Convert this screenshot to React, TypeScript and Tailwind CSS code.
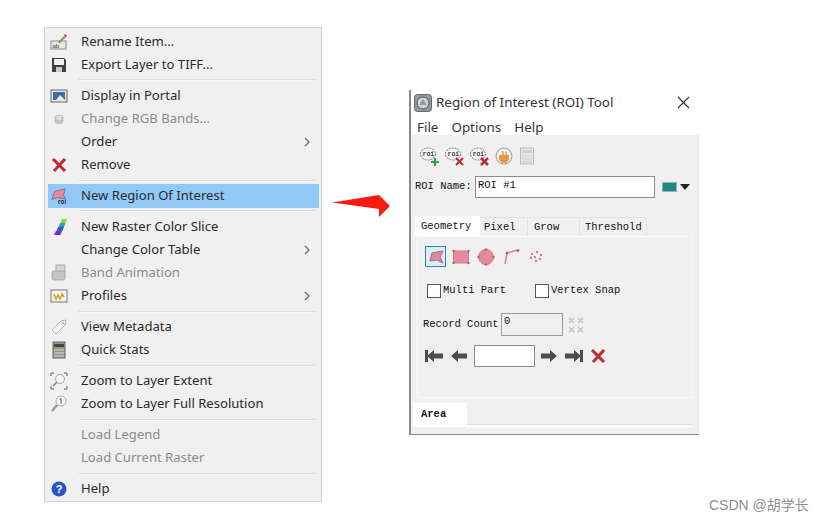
import React from 'react';

const Sep = () => (
  <div className="h-[7.6px] flex items-center pl-[32px] pr-[3px]">
    <div className="h-[2px] w-full bg-[#dedede] border-b border-[#f7f7f7]" />
  </div>
);

type RowProps = {
  label: string;
  icon?: React.ReactNode;
  disabled?: boolean;
  more?: boolean;
  active?: boolean;
};

const Row = ({ label, icon, disabled, more, active }: RowProps) => (
  <div
    className={`h-[23.2px] flex items-center ${active ? 'bg-[#90c8f6] ml-[2px]' : ''} ${
      disabled ? 'text-[#8c8c8c]' : 'text-[#2b2b2b]'
    }`}
  >
    <div className={`${active ? 'w-[33px] pl-[2px]' : 'w-[35px] pl-[4px]'} flex`}>
      <div className="w-[18px] flex justify-center">{icon}</div>
    </div>
    <span className="flex-1">{label}</span>
    {more && (
      <svg width="6" height="10" viewBox="0 0 6 10" className="mr-[9px]">
        <path d="M1 1l4 4-4 4" fill="none" stroke="#666" strokeWidth="1.2" />
      </svg>
    )}
  </div>
);

const Ico = ({ children }: { children: React.ReactNode }) => (
  <svg width="18" height="18" viewBox="0 0 18 18">
    {children}
  </svg>
);

const RedX = ({ s = 16 }: { s?: number }) => (
  <svg width={s} height={s} viewBox="0 0 16 16">
    <path d="M2 2l12 12M14 2L3 14" stroke="#c22a2e" strokeWidth="3" fill="none" />
  </svg>
);

const RoiTool = ({ badge }: { badge?: React.ReactNode }) => (
  <svg width="20" height="20" viewBox="0 0 20 20">
    <ellipse cx="9" cy="8" rx="7.5" ry="6" fill="#f4f4f4" stroke="#777" strokeWidth="1" strokeDasharray="2 1" />
    <text x="3.5" y="10" fontSize="6.5" fontWeight="700" fontFamily="Liberation Mono" fill="#444">
      roi
    </text>
    {badge}
  </svg>
);

const Arrow = ({ dir, bar }: { dir: 'l' | 'r'; bar?: boolean }) => (
  <svg width="18" height="14" viewBox="0 0 18 14" className={dir === 'l' ? '' : '-scale-x-100'}>
    <path d="M1 7l7-6v3.5h9v5H8V13z" fill="#4d4d4d" transform={bar ? 'translate(1 0)' : ''} />
    {bar && <rect x="0" y="1" width="3" height="12" fill="#4d4d4d" />}
  </svg>
);

const Tab = ({ label, active, w }: { label: string; active?: boolean; w: string }) => (
  <div
    className={`${w} flex items-center pt-[1px] ${
      active ? 'h-[20px] bg-white' : 'h-[19px] bg-[#f0f0f0] border-r border-t border-[#e2e2e2]'
    }`}
  >
    {label}
  </div>
);

const Check = ({ label }: { label: string }) => (
  <div className="flex items-center gap-[2px]">
    <div className="w-[14px] h-[14px] bg-white border border-[#555]" />
    <span>{label}</span>
  </div>
);

export default function App() {
  return (
    <div className="relative w-[824px] h-[520px] bg-white overflow-hidden flex items-start pl-[44px] pt-[27px]">
      {/* context menu */}
      <div className="w-[278px] h-[475px] py-[2px] pl-[1px] pr-[2px] bg-[#f0f0f0] border border-[#d0d0d0] text-[13.1px] font-['Noto_Sans',sans-serif]">
        <Row
          label="Rename Item..."
          icon={
            <Ico>
              <rect x="1" y="8" width="15" height="8" fill="#e8e8e8" stroke="#888" />
              <text x="2.5" y="14.5" fontSize="6" fontFamily="Liberation Sans" fill="#444">
                ab
              </text>
              <path d="M8 9l7-7 1.5 1.5-7 7z" fill="#8aa05a" />
              <path d="M14.5 1.5l2 2" stroke="#d24" strokeWidth="1.5" />
            </Ico>
          }
        />
        <Row
          label="Export Layer to TIFF..."
          icon={
            <Ico>
              <path d="M2 2h12l2 2v12H2z" fill="#3f3f3f" />
              <rect x="4" y="3" width="10" height="6" fill="#f0f0f0" />
              <rect x="6" y="11" width="6" height="5" fill="#ccc" />
            </Ico>
          }
        />
        <Sep />
        <Row
          label="Display in Portal"
          icon={
            <Ico>
              <rect x="1" y="3" width="16" height="12" fill="#dfe7ef" stroke="#666" />
              <rect x="3" y="5" width="12" height="8" fill="#3f6f9f" />
              <path d="M6 13l4-5 5 5z" fill="#e8e8e8" />
            </Ico>
          }
        />
        <Row
          label="Change RGB Bands..."
          disabled
          icon={
            <Ico>
              <rect x="4.5" y="5" width="9" height="9" rx="3" fill="#c2c2c2" />
              <rect x="6.5" y="6" width="5" height="4" fill="#e0e0e0" />
            </Ico>
          }
        />
        <Row label="Order" more />
        <Row
          label="Remove"
          icon={
            <svg width="16" height="16" viewBox="0 0 16 16">
              <path d="M2 2l12 12M14 2L3 14" stroke="#c22a2e" strokeWidth="3" fill="none" />
            </svg>
          }
        />
        <Sep />
        <Row
          label="New Region Of Interest"
          active
          icon={
            <svg width="20" height="20" viewBox="0 0 20 20">
              <path d="M2 14L5 5l12-3-2 7 2 4-9-1z" fill="#e58a9c" stroke="#8a6a78" />
              <text x="9" y="18.5" fontSize="7" fontWeight="700" fontFamily="Liberation Sans" fill="#223">
                roi
              </text>
            </svg>
          }
        />
        <Sep />
        <Row
          label="New Raster Color Slice"
          icon={
            <Ico>
              <path d="M12 1h5l-1.5 4h-5z" fill="#8ed04a" />
              <path d="M10 5h5.5L14 9H8.5z" fill="#29a8a0" />
              <path d="M8 9h6l-1.5 4h-6z" fill="#2f5fd0" />
              <path d="M6 13h6l-1.5 4H4z" fill="#7a2fc0" />
            </Ico>
          }
        />
        <Row label="Change Color Table" more />
        <Row
          label="Band Animation"
          disabled
          icon={
            <Ico>
              <rect x="6" y="1" width="9" height="7" fill="#d6d6d6" stroke="#aaa" />
              <rect x="2" y="7" width="13" height="9" rx="2" fill="#c4c4c4" stroke="#a8a8a8" />
            </Ico>
          }
        />
        <Row
          label="Profiles"
          more
          icon={
            <Ico>
              <rect x="1" y="3" width="16" height="12" fill="#f4f4f4" stroke="#777" />
              <path d="M4 7l2 5 2-4 2 4 2-5 2 3" fill="none" stroke="#d2a020" strokeWidth="1.5" />
            </Ico>
          }
        />
        <Sep />
        <Row
          label="View Metadata"
          icon={
            <Ico>
              <path d="M2 12l9-9 5-1-1 5-9 9z" fill="#f6f6f6" stroke="#b4b4b4" />
              <circle cx="13" cy="5" r="1" fill="none" stroke="#b4b4b4" />
            </Ico>
          }
        />
        <Row
          label="Quick Stats"
          icon={
            <Ico>
              <rect x="3" y="1" width="12" height="16" fill="#8f9a8c" stroke="#666" />
              <rect x="4" y="3" width="10" height="3" fill="#3f4a3f" />
              <path d="M4 9h10M4 12h10M4 15h10" stroke="#d6d6d6" />
            </Ico>
          }
        />
        <Sep />
        <Row
          label="Zoom to Layer Extent"
          icon={
            <Ico>
              <circle cx="10" cy="7" r="4.5" fill="#f6f6f6" stroke="#aaa" />
              <path d="M7 10l-4 4" stroke="#999" strokeWidth="2" />
              <path d="M1 4V1h3M14 1h3v3M1 14v3h3M14 17h3v-3" fill="none" stroke="#3a62a8" />
            </Ico>
          }
        />
        <Row
          label="Zoom to Layer Full Resolution"
          icon={
            <Ico>
              <circle cx="11" cy="6" r="5" fill="#f6f6f6" stroke="#aaa" />
              <path d="M7 10l-5 6" stroke="#999" strokeWidth="2.5" />
              <path d="M11 3.5v5M9.8 4.5l1.2-1" stroke="#3a62a8" fill="none" />
            </Ico>
          }
        />
        <Sep />
        <Row label="Load Legend" disabled />
        <Row label="Load Current Raster" disabled />
        <Sep />
        <Row
          label="Help"
          icon={
            <svg width="16" height="16" viewBox="0 0 16 16">
              <circle cx="8" cy="8" r="7.5" fill="#2c54c4" />
              <text x="8" y="12" textAnchor="middle" fontSize="11" fontWeight="700" fontFamily="Liberation Sans" fill="#fff">
                ?
              </text>
            </svg>
          }
        />
      </div>

      {/* red arrow */}
      <svg width="58" height="24" viewBox="0 0 58 24" className="ml-[10px] mt-[167px] shrink-0">
        <path d="M0 7.5L47 0l11 11-11 11v-8z" fill="#fb1a0e" transform="translate(0 1)" />
      </svg>

      {/* ROI tool window */}
      <div className="ml-[19px] mt-[63px] w-[290px] h-[345px] flex flex-col border-l-2 border-b border-[#8a8a8a] bg-white">
        <div className="h-[25px] flex items-center pl-[3px] pr-[9px] text-[13.4px] text-[#333] font-['Noto_Sans',sans-serif]">
          <svg width="18" height="18" viewBox="0 0 18 18" className="mr-[4px]">
            <rect x="0.5" y="0.5" width="17" height="17" rx="3" fill="#8f9aa2" stroke="#666" />
            <circle cx="9" cy="9" r="6" fill="#cfd6da" stroke="#555" />
            <path d="M5 11l4-6 4 6z" fill="#8f9aa2" />
          </svg>
          <span className="flex-1">Region of Interest (ROI) Tool</span>
          <svg width="13" height="13" viewBox="0 0 13 13">
            <path d="M1 1l11 11M12 1L1 12" stroke="#333" strokeWidth="1.1" />
          </svg>
        </div>
        <div className="h-[20px] flex items-center gap-[13px] pl-[6px] pt-[4px] text-[13.4px] text-[#333] font-['Noto_Sans',sans-serif]">
          <span>File</span>
          <span>Options</span>
          <span>Help</span>
        </div>

        <div className="flex-1 flex flex-col bg-[#f0f0f0] text-[#111] text-[10.5px] font-['Liberation_Mono',monospace]">
          <div className="h-[41px] flex items-center gap-[5px] pl-[8px] pt-[1px]">
            <RoiTool badge={<path d="M12 15h3v-3h2v3h3v2h-3v3h-2v-3h-3z" fill="#2ea043" />} />
            <RoiTool badge={<path d="M12 12l7 7M19 12l-7 7" stroke="#c22a2e" strokeWidth="2" />} />
            <RoiTool badge={<path d="M12 12l7 7M19 12l-7 7" stroke="#c22a2e" strokeWidth="2.5" />} />
            <svg width="20" height="20" viewBox="0 0 20 20">
              <circle cx="10" cy="10" r="8" fill="#f4f4f4" stroke="#999" />
              <path d="M5 9h10v5l-3 3H8l-3-3z" fill="#e89a4a" />
              <path d="M8 9V5h2v4M11 9V6h2v3" fill="#f0b070" />
            </svg>
            <svg width="16" height="18" viewBox="0 0 16 18">
              <rect x="1.5" y="1" width="13" height="16" fill="#e6e6e6" stroke="#bbb" />
              <rect x="3.5" y="3" width="9" height="3" fill="#d0d0d0" />
              <path d="M3 9h10M3 12h10M3 15h10" stroke="#cfcfcf" />
            </svg>
          </div>

          <div className="h-[22px] flex items-center pl-[4px]">
            <span className="w-[60px]">ROI Name:</span>
            <div className="w-[180px] h-[22px] bg-white border border-[#8c8c8c] px-[2px] leading-[16px]">ROI #1</div>
            <div className="ml-[7px] w-[15px] h-[10px] bg-[#1e8a7e] border border-[#8fb8b4]" />
            <svg width="10" height="6" viewBox="0 0 10 6" className="ml-[3px]">
              <path d="M0 0h10L5 6z" fill="#222" />
            </svg>
          </div>

          <div className="mt-[18px] pl-[4px] flex items-end">
            <Tab label="Geometry" active w="w-[65px] pl-[6px]" />
            <Tab label="Pixel" w="w-[48px] pl-[4px]" />
            <Tab label="Grow" w="w-[52px] pl-[6px]" />
            <Tab label="Threshold" w="w-[67px] pl-[5px]" />
          </div>

          <div className="ml-[6px] mr-[6px] h-[162px] border border-[#f8f8f8] flex flex-col pl-[7px]">
            <div className="h-[39px] flex items-center gap-[5px]">
              <div className="w-[21px] h-[21px] flex items-center justify-center bg-[#dcecf8] border border-[#3c7fb1]">
                <svg width="18" height="16" viewBox="0 0 18 16">
                  <path d="M3 12L5 4l11-2-3 6 3 6-6-3z" fill="#e58a9c" stroke="#9a6a78" strokeWidth="1" />
                </svg>
              </div>
              <svg width="20" height="20" viewBox="0 0 20 20">
                <rect x="2.5" y="4" width="15" height="12" fill="#e58a9c" stroke="#b88" />
                <g fill="#b85a70">
                  <circle cx="2.5" cy="4" r="1.2" />
                  <circle cx="17.5" cy="4" r="1.2" />
                  <circle cx="2.5" cy="16" r="1.2" />
                  <circle cx="17.5" cy="16" r="1.2" />
                </g>
              </svg>
              <svg width="20" height="20" viewBox="0 0 20 20">
                <circle cx="10" cy="10" r="7.5" fill="#e58a9c" stroke="#b88" />
                <g fill="#b85a70">
                  <circle cx="10" cy="2.5" r="1.2" />
                  <circle cx="17.5" cy="10" r="1.2" />
                  <circle cx="10" cy="17.5" r="1.2" />
                  <circle cx="2.5" cy="10" r="1.2" />
                </g>
              </svg>
              <svg width="20" height="20" viewBox="0 0 20 20">
                <path d="M4 17L6 6l11-3" fill="none" stroke="#c98a98" strokeWidth="1.5" />
                <circle cx="6" cy="6" r="1.3" fill="#c47" />
                <circle cx="17" cy="3.5" r="1.3" fill="#c47" />
              </svg>
              <svg width="20" height="20" viewBox="0 0 20 20">
                <g fill="#d87a8e">
                  <circle cx="6" cy="7" r="1.2" />
                  <circle cx="11" cy="5" r="1.2" />
                  <circle cx="15" cy="8" r="1.2" />
                  <circle cx="5" cy="11" r="1.2" />
                  <circle cx="9" cy="10" r="1.2" />
                  <circle cx="14" cy="12" r="1.2" />
                  <circle cx="10" cy="14" r="1.2" />
                </g>
              </svg>
            </div>
            <div className="mt-[5px] h-[20px] flex items-center gap-[29px] pl-[2px]">
              <Check label="Multi Part" />
              <Check label="Vertex Snap" />
            </div>
            <div className="mt-[12px] h-[23px] flex items-center -ml-[2px]">
              <span className="w-[78px]">Record Count</span>
              <div className="w-[62px] h-[23px] border border-[#9a9a9a] bg-[#f0f0f0] px-[2px] leading-[14px]">0</div>
              <svg width="18" height="18" viewBox="0 0 18 18" className="ml-[4px]">
                <path d="M2 2l5 5M7 2L2 7M11 2l5 5M16 2l-5 5M2 11l5 5M7 11l-5 5M11 11l5 5M16 11l-5 5" stroke="#c4c4c4" strokeWidth="1.6" />
              </svg>
            </div>
            <div className="mt-[9px] h-[22px] flex items-center gap-[7px]">
              <Arrow dir="l" bar />
              <Arrow dir="l" />
              <div className="w-[61px] h-[22px] bg-white border border-[#8c8c8c] -ml-[1px]" />
              <div className="flex items-center gap-[7px] -ml-[2px]">
                <Arrow dir="r" />
                <Arrow dir="r" bar />
              </div>
              <RedX />
            </div>
          </div>

          <div className="mt-[5px] h-[24px] pl-[2px] flex items-start">
            <div className="w-[54px] h-[24px] bg-white flex items-center pl-[8px] font-bold">Area</div>
            <div className="mt-[21px] w-[225px] h-[4px] bg-white border-t border-[#dedede]" />
          </div>
        </div>
      </div>

      {/* watermark over the picture */}
      <div className="absolute left-[709px] top-[496px] text-[14px] leading-[18px] text-[#8f8f8f] font-['Liberation_Sans','Noto_Sans_CJK_SC',sans-serif]">
        CSDN @胡学长
      </div>
    </div>
  );
}
